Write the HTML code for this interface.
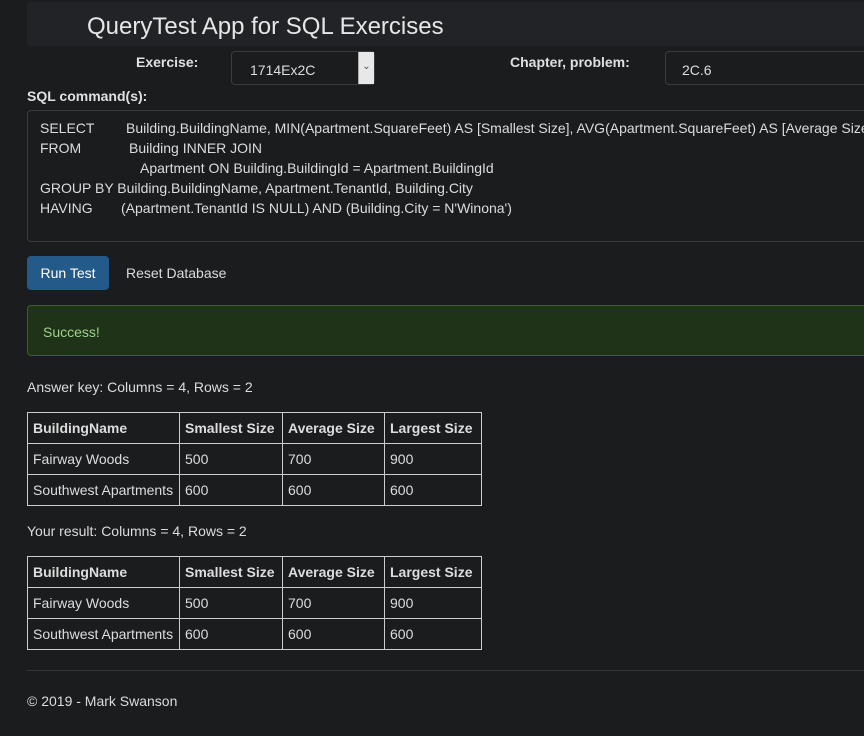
<!DOCTYPE html>
<html><head><style>
body{margin:0;background:#1b1c1e;color:#dcdcdc;font-family:"Liberation Sans",Arial,sans-serif;font-size:14px;width:864px;height:736px;overflow:hidden;position:relative}
.abs{position:absolute}
.hdr{left:27px;top:2px;width:850px;height:44px;background:#222326;border-radius:4px}
.hdr span{position:absolute;left:60px;top:11px;font-size:24px;color:#e6e6e6}
.lbl{font-weight:bold;font-size:14px;color:#e0e0e0}
.inp{border:1px solid #3a3b3e;border-radius:4px;background:#1b1c1e;color:#ddd}
.code{left:27px;top:110px;width:850px;height:130px;border:1px solid #3a3b3e;border-radius:4px;font-size:14px;line-height:20px;overflow:hidden}
.code div{position:absolute;white-space:pre}
table{position:absolute;border-collapse:collapse;left:27px}
td,th{border:1px solid #ccc;height:30px;padding:0 5px;text-align:left;font-size:14px;color:#ddd;white-space:nowrap}
th{font-weight:bold}
</style></head><body>
<div class="abs hdr"><span>QueryTest App for SQL Exercises</span></div>
<div class="abs lbl" style="left:136px;top:54px">Exercise:</div>
<div class="abs inp" style="left:231px;top:51px;width:142px;height:32px"><span style="position:absolute;left:18px;top:10px">1714Ex2C</span><div style="position:absolute;right:0;top:0;width:15px;height:32px;background:#e8e8e8;border-left:1px solid #aaa;color:#555;font-size:10px;text-align:center;line-height:30px">&#8964;</div></div>
<div class="abs lbl" style="left:510px;top:54px">Chapter, problem:</div>
<div class="abs inp" style="left:665px;top:51px;width:220px;height:32px"><span style="position:absolute;left:16px;top:10px">2C.6</span></div>
<div class="abs lbl" style="left:27px;top:88px">SQL command(s):</div>
<div class="abs code">
<div style="left:12px;top:7px">SELECT</div><div style="left:98px;top:7px">Building.BuildingName, MIN(Apartment.SquareFeet) AS [Smallest Size], AVG(Apartment.SquareFeet) AS [Average Size]</div>
<div style="left:12px;top:27px">FROM</div><div style="left:101px;top:27px">Building INNER JOIN</div>
<div style="left:112px;top:47px">Apartment ON Building.BuildingId = Apartment.BuildingId</div>
<div style="left:12px;top:67px">GROUP BY Building.BuildingName, Apartment.TenantId, Building.City</div>
<div style="left:12px;top:87px">HAVING</div><div style="left:93px;top:87px">(Apartment.TenantId IS NULL) AND (Building.City = N'Winona')</div>
</div>
<div class="abs" style="left:27px;top:256px;width:82px;height:34px;background:#245a8a;border-radius:4px;color:#fff;text-align:center;line-height:34px">Run Test</div>
<div class="abs" style="left:126px;top:265px">Reset Database</div>
<div class="abs" style="left:27px;top:305px;width:850px;height:51px;background:#1f3318;border:1px solid #3d5e25;border-radius:4px;box-sizing:border-box"><span style="position:absolute;left:15px;top:18px;color:#9cd28a">Success!</span></div>
<div class="abs" style="left:27px;top:379px">Answer key: Columns = 4, Rows = 2</div>
<table style="top:412px"><tr><th style="width:141px">BuildingName</th><th style="width:92px">Smallest Size</th><th style="width:91px">Average Size</th><th style="width:86px">Largest Size</th></tr>
<tr><td>Fairway Woods</td><td>500</td><td>700</td><td>900</td></tr>
<tr><td>Southwest Apartments</td><td>600</td><td>600</td><td>600</td></tr></table>
<div class="abs" style="left:27px;top:523px">Your result: Columns = 4, Rows = 2</div>
<table style="top:556px"><tr><th style="width:141px">BuildingName</th><th style="width:92px">Smallest Size</th><th style="width:91px">Average Size</th><th style="width:86px">Largest Size</th></tr>
<tr><td>Fairway Woods</td><td>500</td><td>700</td><td>900</td></tr>
<tr><td>Southwest Apartments</td><td>600</td><td>600</td><td>600</td></tr></table>
<div class="abs" style="left:27px;top:670px;width:850px;border-top:1px solid #333"></div>
<div class="abs" style="left:27px;top:693px">© 2019 - Mark Swanson</div>
</body></html>
